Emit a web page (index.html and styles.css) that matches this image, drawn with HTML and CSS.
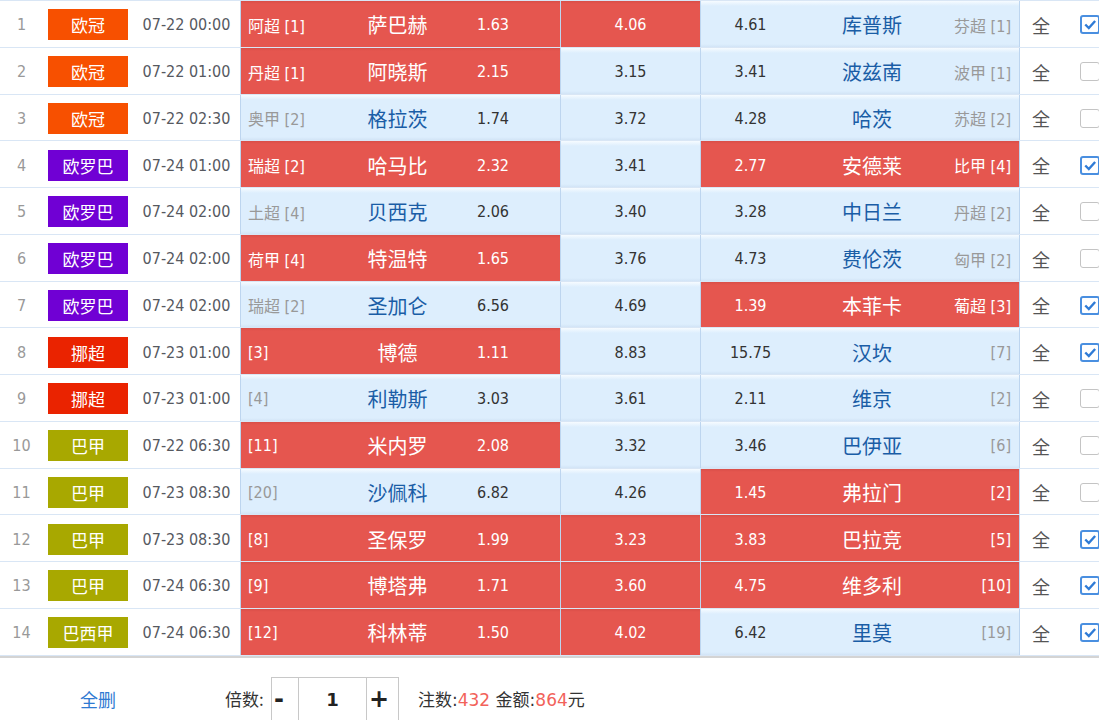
FILE: index.html
```html
<!DOCTYPE html>
<html lang="zh">
<head>
<meta charset="utf-8">
<title>投注单</title>
<link rel="stylesheet" href="styles.css">
</head>
<body>
<div class="page">
  <div class="table">
    <div class="row">
      <div class="idx">1</div><div class="lg"><span class="badge ucl">欧冠</span></div><div class="time">07-22 00:00</div>
      <div class="home red"><span class="rank">阿超 [1]</span><span class="team">萨巴赫</span><span class="odd">1.63</span></div>
      <div class="draw red">4.06</div>
      <div class="away"><span class="odd">4.61</span><span class="team">库普斯</span><span class="rank">芬超 [1]</span></div>
      <div class="all">全</div><div class="chk"><span class="cb on"><svg viewBox="0 0 20 19"><path d="M4 9.5 L8.5 14 L16.5 5"/></svg></span></div>
    </div>
    <div class="row">
      <div class="idx">2</div><div class="lg"><span class="badge ucl">欧冠</span></div><div class="time">07-22 01:00</div>
      <div class="home red"><span class="rank">丹超 [1]</span><span class="team">阿晓斯</span><span class="odd">2.15</span></div>
      <div class="draw">3.15</div>
      <div class="away"><span class="odd">3.41</span><span class="team">波兹南</span><span class="rank">波甲 [1]</span></div>
      <div class="all">全</div><div class="chk"><span class="cb"></span></div>
    </div>
    <div class="row">
      <div class="idx">3</div><div class="lg"><span class="badge ucl">欧冠</span></div><div class="time">07-22 02:30</div>
      <div class="home"><span class="rank">奥甲 [2]</span><span class="team">格拉茨</span><span class="odd">1.74</span></div>
      <div class="draw">3.72</div>
      <div class="away"><span class="odd">4.28</span><span class="team">哈茨</span><span class="rank">苏超 [2]</span></div>
      <div class="all">全</div><div class="chk"><span class="cb"></span></div>
    </div>
    <div class="row">
      <div class="idx">4</div><div class="lg"><span class="badge uel">欧罗巴</span></div><div class="time">07-24 01:00</div>
      <div class="home red"><span class="rank">瑞超 [2]</span><span class="team">哈马比</span><span class="odd">2.32</span></div>
      <div class="draw">3.41</div>
      <div class="away red"><span class="odd">2.77</span><span class="team">安德莱</span><span class="rank">比甲 [4]</span></div>
      <div class="all">全</div><div class="chk"><span class="cb on"><svg viewBox="0 0 20 19"><path d="M4 9.5 L8.5 14 L16.5 5"/></svg></span></div>
    </div>
    <div class="row">
      <div class="idx">5</div><div class="lg"><span class="badge uel">欧罗巴</span></div><div class="time">07-24 02:00</div>
      <div class="home"><span class="rank">土超 [4]</span><span class="team">贝西克</span><span class="odd">2.06</span></div>
      <div class="draw">3.40</div>
      <div class="away"><span class="odd">3.28</span><span class="team">中日兰</span><span class="rank">丹超 [2]</span></div>
      <div class="all">全</div><div class="chk"><span class="cb"></span></div>
    </div>
    <div class="row">
      <div class="idx">6</div><div class="lg"><span class="badge uel">欧罗巴</span></div><div class="time">07-24 02:00</div>
      <div class="home red"><span class="rank">荷甲 [4]</span><span class="team">特温特</span><span class="odd">1.65</span></div>
      <div class="draw">3.76</div>
      <div class="away"><span class="odd">4.73</span><span class="team">费伦茨</span><span class="rank">匈甲 [2]</span></div>
      <div class="all">全</div><div class="chk"><span class="cb"></span></div>
    </div>
    <div class="row">
      <div class="idx">7</div><div class="lg"><span class="badge uel">欧罗巴</span></div><div class="time">07-24 02:00</div>
      <div class="home"><span class="rank">瑞超 [2]</span><span class="team">圣加仑</span><span class="odd">6.56</span></div>
      <div class="draw">4.69</div>
      <div class="away red"><span class="odd">1.39</span><span class="team">本菲卡</span><span class="rank">葡超 [3]</span></div>
      <div class="all">全</div><div class="chk"><span class="cb on"><svg viewBox="0 0 20 19"><path d="M4 9.5 L8.5 14 L16.5 5"/></svg></span></div>
    </div>
    <div class="row">
      <div class="idx">8</div><div class="lg"><span class="badge nor">挪超</span></div><div class="time">07-23 01:00</div>
      <div class="home red"><span class="rank">[3]</span><span class="team">博德</span><span class="odd">1.11</span></div>
      <div class="draw">8.83</div>
      <div class="away"><span class="odd">15.75</span><span class="team">汉坎</span><span class="rank">[7]</span></div>
      <div class="all">全</div><div class="chk"><span class="cb on"><svg viewBox="0 0 20 19"><path d="M4 9.5 L8.5 14 L16.5 5"/></svg></span></div>
    </div>
    <div class="row">
      <div class="idx">9</div><div class="lg"><span class="badge nor">挪超</span></div><div class="time">07-23 01:00</div>
      <div class="home"><span class="rank">[4]</span><span class="team">利勒斯</span><span class="odd">3.03</span></div>
      <div class="draw">3.61</div>
      <div class="away"><span class="odd">2.11</span><span class="team">维京</span><span class="rank">[2]</span></div>
      <div class="all">全</div><div class="chk"><span class="cb"></span></div>
    </div>
    <div class="row">
      <div class="idx">10</div><div class="lg"><span class="badge bra">巴甲</span></div><div class="time">07-22 06:30</div>
      <div class="home red"><span class="rank">[11]</span><span class="team">米内罗</span><span class="odd">2.08</span></div>
      <div class="draw">3.32</div>
      <div class="away"><span class="odd">3.46</span><span class="team">巴伊亚</span><span class="rank">[6]</span></div>
      <div class="all">全</div><div class="chk"><span class="cb"></span></div>
    </div>
    <div class="row">
      <div class="idx">11</div><div class="lg"><span class="badge bra">巴甲</span></div><div class="time">07-23 08:30</div>
      <div class="home"><span class="rank">[20]</span><span class="team">沙佩科</span><span class="odd">6.82</span></div>
      <div class="draw">4.26</div>
      <div class="away red"><span class="odd">1.45</span><span class="team">弗拉门</span><span class="rank">[2]</span></div>
      <div class="all">全</div><div class="chk"><span class="cb"></span></div>
    </div>
    <div class="row">
      <div class="idx">12</div><div class="lg"><span class="badge bra">巴甲</span></div><div class="time">07-23 08:30</div>
      <div class="home red"><span class="rank">[8]</span><span class="team">圣保罗</span><span class="odd">1.99</span></div>
      <div class="draw red">3.23</div>
      <div class="away red"><span class="odd">3.83</span><span class="team">巴拉竞</span><span class="rank">[5]</span></div>
      <div class="all">全</div><div class="chk"><span class="cb on"><svg viewBox="0 0 20 19"><path d="M4 9.5 L8.5 14 L16.5 5"/></svg></span></div>
    </div>
    <div class="row">
      <div class="idx">13</div><div class="lg"><span class="badge bra">巴甲</span></div><div class="time">07-24 06:30</div>
      <div class="home red"><span class="rank">[9]</span><span class="team">博塔弗</span><span class="odd">1.71</span></div>
      <div class="draw red">3.60</div>
      <div class="away red"><span class="odd">4.75</span><span class="team">维多利</span><span class="rank">[10]</span></div>
      <div class="all">全</div><div class="chk"><span class="cb on"><svg viewBox="0 0 20 19"><path d="M4 9.5 L8.5 14 L16.5 5"/></svg></span></div>
    </div>
    <div class="row">
      <div class="idx">14</div><div class="lg"><span class="badge bra">巴西甲</span></div><div class="time">07-24 06:30</div>
      <div class="home red"><span class="rank">[12]</span><span class="team">科林蒂</span><span class="odd">1.50</span></div>
      <div class="draw red">4.02</div>
      <div class="away"><span class="odd">6.42</span><span class="team">里莫</span><span class="rank">[19]</span></div>
      <div class="all">全</div><div class="chk"><span class="cb on"><svg viewBox="0 0 20 19"><path d="M4 9.5 L8.5 14 L16.5 5"/></svg></span></div>
    </div>
  </div>
  <div class="footer">
    <a class="del">全删</a>
    <span class="mul-label">倍数:</span>
    <div class="stepper">
      <span class="minus">-</span>
      <span class="val">1</span>
      <span class="plus">+</span>
    </div>
    <span class="summary">注数:<em>432</em> 金额:<em>864</em>元</span>
  </div>
</div>
</body>
</html>
```

FILE: styles.css
```css
html, body {
  margin: 0;
  padding: 0;
  overflow: hidden;
  background: #fff;
}
body {
  font-family: "DejaVu Sans Condensed", "DejaVu Sans", "Noto Sans CJK SC", sans-serif;
  font-size: 16px;
  color: #333;
}
.page {
  width: 1130px;
}
.table {
  border-top: 1px solid #d9e6f5;
}
.row {
  display: grid;
  grid-template-columns: 43px 90px 107px 320px 140px 320px 42px 68px;
  height: 46.75px;
  box-sizing: border-box;
  border-bottom: 1px solid #d9e6f5;
}
.row > div {
  display: flex;
  align-items: center;
  min-width: 0;
  box-sizing: border-box;
  padding-top: 2px;
}
.idx {
  justify-content: center;
  color: #999;
}
.lg {
  justify-content: center;
}
.badge {
  display: flex;
  align-items: center;
  justify-content: center;
  width: 80px;
  height: 31px;
  color: #fff;
  font-family: "Noto Sans CJK SC", sans-serif;
  font-size: 17px;
}
.ucl { background: #f75000; }
.uel { background: #7000d4; }
.nor { background: #ea2300; }
.bra { background: #a8a800; }
.time {
  justify-content: center;
  color: #56595f;
}
.home, .draw, .away {
  border-left: 1px solid #bdd5ef;
  background: linear-gradient(to bottom, #f6fbff 0, #ddeefd 5px, #ddeefd calc(100% - 3px), #d2e4f6 100%);
}
.away {
  border-right: 1px solid #bdd5ef;
}
.red {
  background: linear-gradient(to bottom, #d94e48 0, #e5564f 3px, #e5564f 100%);
}
.row > .home {
  display: grid;
  grid-template-columns: 99px 115px 76px 1fr;
  align-items: center;
}
.row > .away {
  display: grid;
  grid-template-columns: 99px 144px 1fr;
  align-items: center;
}
.draw {
  justify-content: center;
  color: #333;
}
.rank {
  color: #999;
  white-space: nowrap;
}
.home .rank {
  padding-left: 7px;
}
.away .rank {
  text-align: right;
  padding-right: 8px;
}
.team {
  text-align: center;
  font-family: "Noto Sans CJK SC", sans-serif;
  font-size: 20px;
  color: #1a5da6;
  white-space: nowrap;
}
.odd {
  text-align: center;
  color: #333;
}
.red .rank, .red .team, .red .odd, .row > .draw.red {
  color: #fff;
}
.all {
  justify-content: center;
  font-family: "Noto Sans CJK SC", sans-serif;
  font-size: 18px;
  color: #555;
}
.chk {
  padding-left: 18px;
}
.cb {
  display: block;
  width: 20px;
  height: 19px;
  box-sizing: border-box;
  border: 1px solid #c4c4c4;
  border-radius: 3px;
  background: #fff;
}
.cb.on {
  border: 2px solid #4a8fe0;
}
.cb svg {
  display: block;
  width: 16px;
  height: 15px;
}
.cb path {
  fill: none;
  stroke: #2f7bd6;
  stroke-width: 3;
}
.footer {
  display: flex;
  align-items: center;
  border-top: 2px solid #d4d4d4;
  padding-top: 19px;
  height: 44px;
  font-family: "Noto Sans CJK SC", sans-serif;
  font-size: 16px;
  color: #333;
}
.del {
  margin-left: 80px;
  width: 36px;
  font-size: 18px;
  color: #2f7ad2;
}
.mul-label {
  margin-left: 109px;
  width: 46px;
  font-size: 17px;
}
.stepper {
  display: flex;
  height: 44px;
  box-sizing: border-box;
  border: 1px solid #c8c8c8;
  border-bottom: none;
}
.stepper span {
  display: flex;
  align-items: center;
  font-family: "DejaVu Sans", sans-serif;
  font-weight: bold;
  color: #222;
}
.minus {
  width: 27px;
  box-sizing: border-box;
  padding-left: 2px;
  font-size: 24px;
  border-right: 1px solid #c8c8c8;
}
.val {
  width: 67px;
  justify-content: center;
  font-size: 18px;
  border-right: 1px solid #c8c8c8;
  color: #000;
}
.plus {
  width: 31px;
  box-sizing: border-box;
  padding-left: 2px;
  font-size: 24px;
}
.summary {
  margin-left: 19px;
  font-family: "DejaVu Sans", "Noto Sans CJK SC", sans-serif;
  font-size: 17px;
}
.summary em {
  font-style: normal;
  color: #f2625a;
}
```
